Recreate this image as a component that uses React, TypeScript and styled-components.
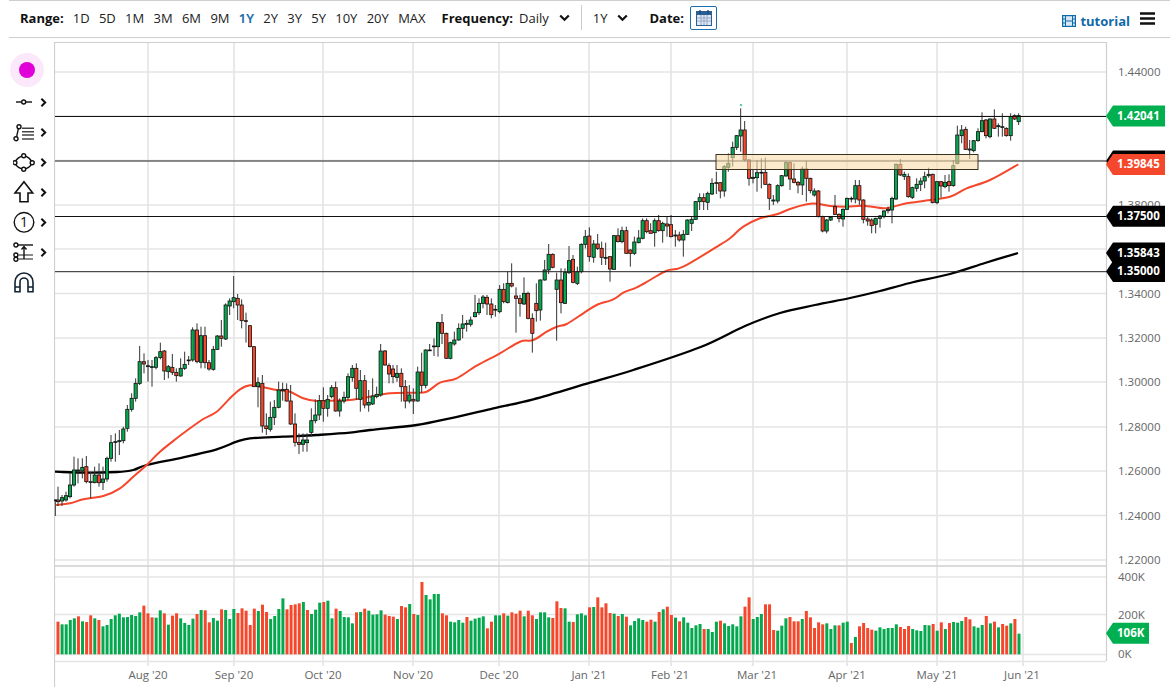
import React from 'react';
import styled, { createGlobalStyle } from 'styled-components';

const GREEN = '#04a84e';
const RED = '#f4472b';
const GRID = '#e4e4e4';
const AXIS = '#cfcfcf';

const GlobalStyle = createGlobalStyle`
  html, body {
    margin: 0;
    padding: 0;
    background: #fff;
    font-family: 'Open Sans', 'Noto Sans', sans-serif;
  }
`;

const Page = styled.div`
  width: 1170px;
  height: 694px;
  overflow: hidden;
  position: relative;
`;

const Toolbar = styled.div`
  display: flex;
  align-items: center;
  height: 38px;
  margin-left: 9px;
  padding: 0 15px 3px 11px;
  box-sizing: border-box;
  border-top: 1px solid ${AXIS};
  border-bottom: 1px solid ${AXIS};
  font-size: 13px;
  color: #222;
`;

const Label = styled.span<{ $ml?: number }>`
  font-weight: 700;
  color: #111;
  margin-left: ${(p) => p.$ml || 0}px;
`;

const RangeList = styled.div`
  display: flex;
  gap: 9.3px;
  margin-left: 9px;
`;

const RangeItem = styled.span<{ $active?: boolean }>`
  color: ${(p) => (p.$active ? '#1c6aa8' : '#222')};
  font-weight: ${(p) => (p.$active ? 600 : 400)};
  -webkit-text-stroke: ${(p) => (p.$active ? '0.2px #1c6aa8' : '0')};
`;

const Select = styled.span<{ $ml: number }>`
  display: flex;
  align-items: center;
  gap: 10px;
  margin-left: ${(p) => p.$ml}px;
`;

const Separator = styled.div`
  width: 1px;
  height: 25px;
  margin-left: 11px;
  background: #ccc;
`;

const DateButton = styled.button`
  display: flex;
  align-items: center;
  justify-content: center;
  width: 27px;
  height: 24px;
  margin-left: 6px;
  padding: 0;
  background: #fff;
  border: 1px solid #1a6fb0;
  border-radius: 2px;
`;

const Tutorial = styled.a`
  display: flex;
  align-items: center;
  gap: 4px;
  margin-left: auto;
  margin-top: 7px;
  font-size: 13px;
  font-weight: 700;
  color: #0f6aa8;
`;

const Burger = styled.svg`
  margin-left: 10px;
  margin-top: 1px;
`;

const Body = styled.div`
  display: flex;
  margin-top: 4px;
`;

const Sidebar = styled.div`
  width: 54px;
  flex: none;
  padding-top: 11px;
  box-sizing: border-box;
`;

const ColorHalo = styled.div`
  display: flex;
  align-items: center;
  justify-content: center;
  width: 34px;
  height: 34px;
  margin-left: 10px;
  border-radius: 50%;
  background: #fbe9fb;
`;

const ColorDot = styled.div`
  width: 16px;
  height: 16px;
  border-radius: 50%;
  background: #e000d8;
`;

const ToolRow = styled.div`
  display: flex;
  align-items: center;
  height: 30px;
  padding-left: 13px;
`;

const ToolIcon = styled.svg`
  width: 22px;
  height: 30px;
  fill: none;
  stroke: #111;
  stroke-width: 1.4;
`;

const ToolChevron = styled.svg`
  margin-left: 5px;
`;

const ChartSvg = styled.svg`
  display: block;
  flex: none;
`;

const Tick = styled.text`
  font-family: 'Open Sans', 'Noto Sans', sans-serif;
  font-size: 11.5px;
  fill: #666;
`;

const TagText = styled.text`
  font-family: 'Open Sans', 'Noto Sans', sans-serif;
  font-size: 11.5px;
  font-weight: 700;
  fill: #fff;
`;

const OneDigit = styled.text`
  font-family: 'Open Sans', 'Noto Sans', sans-serif;
  font-size: 14px;
  fill: #111;
  stroke: none;
`;

// rows: X top bottom high low colour, read off 3x crops, so X/3 + offset is the page pixel
const candleSeg = (ox: number, oy: number, rows: string) =>
  rows
    .trim()
    .split(/\s*,\s*/)
    .map((r) => {
      const [x, top, bot, hi, lo, c] = r.split(' ');
      return {
        x: ox + +x / 3,
        top: oy + +top / 3,
        bot: oy + +bot / 3,
        hi: oy + +hi / 3,
        lo: oy + +lo / 3,
        up: c === 'g',
      };
    });

const candles = [
  ...candleSeg(50, 270, `16 690 692 688 738 g,24 690 695 650 708 r,36 683 693 675 708 g,48 677 690 665 695 g,60 645 680 610 685 g,72 600 645 560 650 g,84 600 603 565 640 g,97 592 603 565 625 g,109 590 635 558 640 r,122 635 637 605 685 r,134 615 638 590 640 g,147 615 638 580 650 r,159 627 637 590 660 g,171 565 627 560 635 g,183 518 565 495 575 g,196 515 517 490 575 g,208 512 515 480 555 g,220 477 512 470 520 g,232 418 475 405 485 g,245 385 418 370 425 g,257 340 385 325 395 g,269 275 340 228 345 g,282 275 282 250 310 r,294 287 290 270 335 g,306 290 292 270 350 g,318 263 292 258 298 g,331 245 263 218 268 g,343 243 303 240 330 r,355 290 305 285 325 g,367 292 307 252 315 r,379 307 317 295 335 r,392 295 318 265 320 g,404 283 295 245 300 g,416 270 272 258 285 g,428 180 270 172 275 g,441 180 275 160 280 r,453 197 277 170 295 g,465 197 278 170 295 r,477 278 297 270 302 r,490 238 298 228 302 g,502 198 238 195 240 g,514 198 205 150 230 r,527 105 207 100 210 g,539 93 108 85 135 g,551 83 95 18 115 g,563 85 105 72 150 r,575 105 152 88 175 r,588 152 154 128 218 r,600 167 230 165 232 r,612 230 350 228 350 r,624 338 350 322 412 g,637 340 468 315 488 r,649 468 476 430 495 r,661 442 478 395 485 g,673 412 442 390 465 g,686 360 412 335 415 g,698 358 362 338 392 g,710 358 393 340 395 r,722 393 462 345 465 r,735 462 517 430 530 r,747 517 523 490 552 r,759 510 523 490 545 g,771 510 518 490 545 g,784 452 487 415 500 g,796 435 452 388 460 g,808 392 435 375 450 g,820 392 415 352 455 r,833 388 415 375 440 g,845 353 380 345 385 g,857 353 423 335 425 r,869 393 423 385 440 g,882 382 393 365 400 g,894 320 382 310 390 g`),
  ...candleSeg(350, 200, `7 505 533 495 545 g,19 505 565 490 600 r,31 542 598 510 635 g,44 542 615 525 625 r,56 607 615 570 635 g,68 588 612 535 615 g,80 583 590 560 595 g,92 453 585 432 590 g,105 453 495 450 497 r,117 497 522 490 550 r,129 507 530 495 550 r,141 520 532 495 545 g,154 520 560 505 605 r,166 560 603 540 625 r,178 585 603 555 610 g,190 598 603 565 642 r,203 516 603 500 605 g,215 516 556 458 578 r,227 450 556 448 565 g,239 450 452 432 452 g,252 438 440 415 468 g,264 368 440 365 470 g,276 368 400 342 432 r,289 400 475 398 477 r,301 428 475 425 478 g,313 420 432 395 437 g,326 385 420 370 422 g,338 372 385 345 415 g,350 370 373 360 395 g,362 360 373 350 380 g,375 338 350 285 352 g,387 310 338 295 345 g,399 291 310 285 325 g,411 292 312 285 345 r,424 312 344 295 355 r,436 328 330 315 350 g,449 268 335 255 340 g,461 268 305 250 310 r,473 250 308 215 310 g,485 250 258 190 262 r,498 288 295 262 398 r,510 296 310 285 350 r,522 280 312 232 315 g,534 280 355 275 358 r,547 355 400 340 458 r,559 310 332 250 365 r,571 240 330 238 362 g,584 210 240 180 242 g,596 163 210 132 222 g,608 163 202 160 205 r,620 240 268 218 422 g,633 240 308 205 340 r,645 218 310 205 312 g,657 182 218 138 222 g,669 178 247 165 250 r,682 215 250 200 255 g,694 133 215 130 220 g,706 110 133 90 145 g,718 108 170 82 185 r,731 132 172 120 188 g,743 132 145 102 150 r,755 145 172 125 195 r,767 172 175 128 195 g,780 170 207 168 245 r,792 107 208 105 210 g,804 107 125 85 127 r,816 92 125 80 130 g,829 92 160 80 162 r,841 150 160 148 200 r,853 126 160 110 165 g,866 114 128 90 130 g,878 62 115 55 118 g,890 62 95 55 100 r,902 92 100 70 100 r,914 62 98 55 140 g,926 62 92 45 95 r,938 70 92 65 128 g,951 72 78 50 110 r,963 74 110 45 112 r,976 105 108 90 140 g,988 105 120 95 125 r,1000 103 120 90 170 g,1012 60 103 58 105 g`),
  ...candleSeg(690, 95, `5 373 385 365 408 g,17 320 373 318 375 g,29 308 320 295 345 g,41 308 320 295 345 r,53 295 322 290 345 g,66 265 297 250 300 g,79 263 265 230 297 g,91 263 288 262 310 r,103 215 288 210 305 g,115 205 217 175 230 g,128 157 188 140 215 g,140 122 157 120 165 g,152 105 123 40 170 g,164 105 195 78 200 r,177 195 250 192 272 r,189 247 250 225 265 g,201 233 248 195 290 g,214 232 234 190 280 g,226 232 268 188 270 r,238 268 310 265 345 r,250 315 318 300 330 g,263 272 318 268 325 g,275 242 272 240 275 g,288 203 243 198 245 g,300 203 252 200 285 r,312 252 262 205 265 r,324 262 270 258 295 r,337 222 270 215 300 g,349 222 250 197 320 r,361 250 287 248 295 r,373 288 300 280 305 g,385 288 365 285 367 r,398 365 408 362 412 r,410 375 408 372 415 g,422 367 375 365 378 g,435 335 358 300 360 r,447 358 370 355 382 r,459 343 372 340 395 g,471 310 343 308 345 g,484 310 312 305 322 g,496 272 312 255 325 g,508 272 315 255 330 r,520 315 373 313 385 r,533 372 378 365 392 r,545 375 392 370 415 r,557 370 388 368 415 g,570 363 370 360 398 g,582 348 365 345 370 g,594 343 347 335 355 g,606 310 345 305 385 g,618 208 312 205 315 g,631 208 240 192 243 r,643 238 244 230 255 g,655 245 305 235 308 r,667 278 307 275 312 g,680 268 280 250 290 g,692 258 268 248 288 g,704 245 258 230 280 g,716 238 242 218 248 g,728 238 323 236 325 r,741 260 323 258 328 g,753 260 273 258 308 r,765 262 275 240 280 g,777 260 272 238 290 r,790 212 272 195 275 g,802 120 205 92 208 g,815 105 122 90 145 g,827 103 163 95 165 r,839 162 165 135 192 g,851 137 167 135 172 g,864 110 137 100 140 g,876 77 110 52 112 g,888 75 122 72 130 r,900 72 125 70 130 g,913 72 100 43 102 r,925 92 95 85 125 g,937 95 97 55 125 g,949 100 122 97 125 r,962 65 122 55 137 g,974 62 72 58 75 r,986 62 80 55 90 g`),
];

const volSeg = (oy: number, s: string) =>
  s.split(' ').map((t) => ({ up: t[0] === 'g', top: oy + +t.slice(1) / 3 }));

const volumes = [
  ...volSeg(560, 'r185 g193 g193 g180 g175 r169 g184 r186 r166 g175 r180 g199 g195 g177 g166 g161 g172 g171 g165 g168 g157 r137 r160 r172 g173 g151 r160 g194 r167 r160 g175 g189 g195 g176 r162 g150 r151 r187 g174 g182 r148 g150 g177 g147 r159 r145 r152 r195 r146 g153 r134 r156 g177 g168 g147 g115 r148 r135 r133 r130 g126 r150 g162 g149 g128 r126 g122 g175 r146 g153 g171 g172 g190 r157 g156 r146 g152 g164 g163 g151 r164 r168 r170 g177 r138 r142 g132 r162 g165 r66 g105 g118 g102 g102'),
  ...volSeg(570, 'r130 r136 g155 g157 g150 g158 r141 g152 g146 g143 g139 r175 r155 g136 g136 r130 g137 r127 r131 r122 g139 r122 r136 g147 g127 g127 g142 r144 r94 r114 g115 g155 r156 g133 g130 g136 r112 g111 r82 r112 r100 r129 g131 r138 g132'),
  ...volSeg(570, 'r140 g166 g153 g145 g150 r155 r149 g155 r126 g118 r110 r135 g143 r154 g142 g158 g174 g166 g162 r177 g177 g186 g155 r152 g160 g168 g163 g169 g139 r110 r82 g147 g141 g132 r103 r103 r180 g182 g167 g145 r141 r154 r154 g147 r123 r142 r174'),
  ...volSeg(560, 'r187 r193 g190 g207 g196 r196 g188 g185 r249 g231 r199 r189 r204 r209 g212 g202 g207 g204 g204 g193 r201 r207 r198 g207 g211 g213 g195 g196 r192 g212 r187 g207 r189 g186 g188 g183 r171 r178 g199 g203 g195 r168 g190 r185 g202 r192 r197 g190 r177 g221'),
];

const VOL_BASE = 654.3;
const VOL_START = 58;
const VOL_STEP = (1019 - 58) / (volumes.length - 1);

const z = (ox: number, oy: number, pts: number[][]) =>
  pts.map(([x, y]) => [ox + x / 3, oy + y / 3]);

const ma50 = [
  ...z(50, 270, [[18, 705], [60, 700], [100, 688], [160, 678], [210, 655], [250, 620], [290, 585], [330, 545], [380, 505], [420, 475], [460, 447], [500, 425], [540, 385], [570, 358], [600, 346], [640, 352], [680, 360], [720, 365], [760, 385], [800, 393], [840, 392], [900, 390]]),
  ...z(350, 200, [[60, 590], [120, 580], [190, 578], [230, 575], [270, 548], [320, 535], [380, 497], [450, 460], [510, 425], [550, 420], [590, 395], [620, 380], [650, 372], [700, 340], [740, 315], [790, 298], [820, 278], [860, 262], [900, 240], [950, 212], [1000, 200]]),
  ...z(690, 95, [[92, 448], [120, 430], [160, 395], [210, 370], [260, 358], [300, 342], [350, 328], [380, 326], [420, 333], [470, 335], [520, 332], [580, 340], [610, 335], [650, 325], [700, 318], [780, 305], [830, 280], [900, 255], [985, 208]]),
];

const ma200 = [
  ...z(50, 270, [[15, 605], [100, 608], [200, 606], [250, 600], [290, 585], [400, 562], [500, 538], [560, 515], [600, 505], [700, 500], [800, 495], [900, 488]]),
  ...z(350, 200, [[60, 690], [200, 675], [300, 655], [430, 625], [550, 598], [720, 548], [850, 510], [1050, 442]]),
  [745, 326], [780, 313], [815, 305], [850, 298], [880, 291], [910, 283], [950, 274], [985, 263], [1018, 253],
];

// catmull-rom through the read points so the averages bend instead of kink
const smoothPath = (pts: number[][]) => {
  let d = `M${pts[0][0].toFixed(1)} ${pts[0][1].toFixed(1)}`;
  for (let i = 0; i < pts.length - 1; i++) {
    const p0 = pts[i - 1] || pts[i];
    const p1 = pts[i];
    const p2 = pts[i + 1];
    const p3 = pts[i + 2] || p2;
    const c1 = [p1[0] + (p2[0] - p0[0]) / 6, p1[1] + (p2[1] - p0[1]) / 6];
    const c2 = [p2[0] - (p3[0] - p1[0]) / 6, p2[1] - (p3[1] - p1[1]) / 6];
    d += `C${c1[0].toFixed(1)} ${c1[1].toFixed(1)} ${c2[0].toFixed(1)} ${c2[1].toFixed(1)} ${p2[0].toFixed(1)} ${p2[1].toFixed(1)}`;
  }
  return d;
};

const gridRows = [72, 116, 160.5, 205, 249, 293.5, 338, 382, 427, 471, 515.5, 560];

// 1.42, 1.40 and 1.36 sit fully behind the price tags, so they are not drawn
const priceTicks = [
  ['1.44000', 72], ['1.38000', 205], ['1.34000', 293.5], ['1.32000', 338], ['1.30000', 382],
  ['1.28000', 427], ['1.26000', 471], ['1.24000', 515.5], ['1.22000', 560],
] as const;

const monthLines = [148, 234, 323, 413, 499, 589, 671, 753, 847, 937, 1023];
const monthLabels = [
  ["Aug '20", 148], ["Sep '20", 234], ["Oct '20", 323], ["Nov '20", 413], ["Dec '20", 499], ["Jan '21", 589],
  ["Feb '21", 670], ["Mar '21", 757], ["Apr '21", 847], ["May '21", 937], ["Jun '21", 1022],
] as const;

const ranges = ['1D', '5D', '1M', '3M', '6M', '9M', '1Y', '2Y', '3Y', '5Y', '10Y', '20Y', 'MAX'];

const Chevron: React.FC = () => (
  <svg width="11" height="8" viewBox="0 0 11 8">
    <path d="M1.2 1.5 L5.5 5.8 L9.8 1.5" fill="none" stroke="#111" strokeWidth="2.2" />
  </svg>
);

const SideChevron: React.FC = () => (
  <ToolChevron width="7" height="9" viewBox="0 0 7 9">
    <path d="M1.4 0.8 L5.2 4.5 L1.4 8.2" fill="none" stroke="#111" strokeWidth="2" />
  </ToolChevron>
);

const PriceTag: React.FC<{ y: number; color: string; text?: string; right?: number; h?: number }> = ({
  y,
  color,
  text,
  right = 1165,
  h = 10.5,
}) => (
  <g>
    <polygon
      points={`1106,${y} 1113,${y - h} ${right},${y - h} ${right},${y + h} 1113,${y + h}`}
      fill={color}
    />
    {text && (
      <TagText x="1117" y={y + 3.6}>
        {text}
      </TagText>
    )}
  </g>
);

const tools: React.ReactNode[] = [
  <>
    <line x1="3" y1="15" x2="19" y2="15" />
    <circle cx="10.7" cy="15" r="2" fill="#fff" />
  </>,
  <>
    <circle cx="6" cy="9.7" r="2" />
    <circle cx="3" cy="21.7" r="2" />
    <line x1="5.4" y1="11.6" x2="3.6" y2="19.8" />
    <path d="M9 11.3H21M9 14.7H21M9 18H21M9 22H21" stroke="#444" />
  </>,
  <>
    <path d="M10.7 8.7Q4 10 1.8 15.7Q4 21 10.7 22.3Q17 21 19.2 15.7Q17 10 10.7 8.7Z" />
    <circle cx="10.7" cy="8.7" r="2" fill="#fff" />
    <circle cx="1.9" cy="15.7" r="2" fill="#fff" />
    <circle cx="19.2" cy="15.7" r="2" fill="#fff" />
    <circle cx="10.7" cy="22.3" r="2" fill="#fff" />
  </>,
  <polygon points="11,4.7 2,16 7,16 7,24.7 15,24.7 15,16 19.7,16" strokeWidth="1.6" />,
  <>
    <circle cx="11" cy="15.3" r="9.8" />
    <OneDigit x="11" y="20.3" textAnchor="middle">
      1
    </OneDigit>
  </>,
  <>
    <line x1="5" y1="8" x2="20" y2="8" />
    <circle cx="2.9" cy="8" r="2" />
    <circle cx="2.9" cy="18" r="2" />
    <circle cx="2.9" cy="22.3" r="2" />
    <path d="M5 18H20M5 22H20" stroke="#666" />
    <path d="M11 9V22M8.5 12.5L11 9.5L13.5 12.5" />
  </>,
  <>
    <path d="M2 24.7V15a9 9 0 0 1 18 0V24.7H15V15a4 4 0 0 0-8 0V24.7Z" strokeWidth="1.6" stroke="#123" />
    <path d="M2 20H7M15 20H20" stroke="#123" />
  </>,
];

const Candles: React.FC = () => (
  <g>
    {candles.map((c, i) => (
      <g key={i}>
        <line x1={c.x} x2={c.x} y1={c.hi} y2={c.lo} stroke="#333" strokeWidth="1" />
        <rect
          x={c.x - 1.6}
          y={c.top}
          width={3.2}
          height={Math.max(c.bot - c.top, 0.8)}
          fill={c.up ? GREEN : RED}
          stroke="#111"
          strokeWidth="0.8"
        />
      </g>
    ))}
  </g>
);

const VolumeBars: React.FC = () => (
  <g>
    {volumes.map((v, i) => (
      <rect
        key={i}
        x={VOL_START + i * VOL_STEP - 1.5}
        y={v.top}
        width={3}
        height={VOL_BASE - v.top}
        fill={v.up ? GREEN : RED}
      />
    ))}
  </g>
);

const Chart: React.FC = () => (
  <ChartSvg width="1116" height="652" viewBox="54 42 1116 652">
    {gridRows.map((y) => (
      <line key={y} x1="55" x2="1106" y1={y} y2={y} stroke={GRID} strokeWidth="1.6" />
    ))}
    {[577, 614.5, 654.5, 661.5].map((y) => (
      <line key={y} x1="55" x2="1106" y1={y} y2={y} stroke={GRID} strokeWidth="1.6" />
    ))}
    {monthLines.map((x) => (
      <line key={x} x1={x} x2={x} y1="42" y2="666" stroke={GRID} strokeWidth="1.6" />
    ))}
    <line x1="54" x2="1106" y1="42.5" y2="42.5" stroke={AXIS} />
    <line x1="54" x2="1106" y1="566" y2="566" stroke={AXIS} strokeWidth="1.6" />
    <line x1="54.5" x2="54.5" y1="42" y2="687" stroke={AXIS} strokeWidth="1.2" />
    <line x1="1106.5" x2="1106.5" y1="42" y2="661" stroke={AXIS} strokeWidth="1.2" />

    <VolumeBars />
    <path d={smoothPath(ma200)} fill="none" stroke="#000" strokeWidth="2.3" />
    <path d={smoothPath(ma50)} fill="none" stroke={RED} strokeWidth="2" />
    <Candles />
    <line x1="740" x2="742" y1="104.5" y2="105.5" stroke="#3fc483" strokeWidth="1.4" />

    <line x1="55" x2="1106" y1="116.5" y2="116.5" stroke="#111" />
    <line x1="55" x2="1106" y1="161" y2="161" stroke="#222" />
    <line x1="55" x2="1106" y1="216.5" y2="216.5" stroke="#111" />
    <line x1="55" x2="1106" y1="271.7" y2="271.7" stroke="#222" />
    <rect x="716" y="154.5" width="262" height="15" fill="#f8dca8" fillOpacity="0.6" stroke="#3a3020" />

    {priceTicks.map(([t, y]) => (
      <Tick key={t} x="1118" y={y + 4}>
        {t}
      </Tick>
    ))}
    {[['400K', 581], ['200K', 619], ['0K', 658]].map(([t, y]) => (
      <Tick key={t} x="1118" y={y}>
        {t}
      </Tick>
    ))}
    {monthLabels.map(([t, x]) => (
      <Tick key={t} x={x} y="679" textAnchor="middle">
        {t}
      </Tick>
    ))}

    <PriceTag y={116} color="#00b050" text="1.42041" />
    <PriceTag y={161} color="#000" />
    <PriceTag y={164.5} color="#f4472b" text="1.39845" />
    <PriceTag y={216.3} color="#000" text="1.37500" />
    <PriceTag y={253} color="#000" text="1.35843" />
    <PriceTag y={271.6} color="#000" text="1.35000" />
    <PriceTag y={633.3} color="#00b050" text="106K" right={1149} />
  </ChartSvg>
);

const App: React.FC = () => (
  <Page>
    <GlobalStyle />
    <Toolbar>
      <Label>Range:</Label>
      <RangeList>
        {ranges.map((r) => (
          <RangeItem key={r} $active={r === '1Y'}>
            {r}
          </RangeItem>
        ))}
      </RangeList>
      <Label $ml={16}>Frequency:</Label>
      <Select $ml={6}>
        Daily <Chevron />
      </Select>
      <Separator />
      <Select $ml={11}>
        1Y <Chevron />
      </Select>
      <Label $ml={21}>Date:</Label>
      <DateButton aria-label="Date">
        <svg width="16" height="17" viewBox="0 0 16 17">
          <rect x="0.5" y="2.5" width="15" height="14" fill="#dbe6f2" stroke="#2d5f92" />
          <rect x="1" y="3" width="14" height="3" fill="#2d5f92" />
          <path d="M4 1V5M12 1V5" stroke="#174a7e" strokeWidth="1.4" />
          <path d="M5 6V16M8 6V16M11 6V16M1 9H15M1 12H15" stroke="#8c9fc4" strokeWidth="0.8" />
        </svg>
      </DateButton>
      <Tutorial>
        <svg width="14" height="12" viewBox="0 0 14 12">
          <rect x="0.6" y="0.6" width="12.8" height="10.8" fill="#d8e8f4" stroke="#0f6aa8" strokeWidth="1.2" />
          <path d="M3.5 1V11M10.5 1V11M1 4H3.5M1 8H3.5M10.5 4H13M10.5 8H13M3.5 6H10.5" stroke="#0f6aa8" />
        </svg>
        tutorial
      </Tutorial>
      <Burger width="15" height="13" viewBox="0 0 15 13">
        <path d="M0 1.5H15M0 6.5H15M0 11.5H15" stroke="#111" strokeWidth="2.4" />
      </Burger>
    </Toolbar>
    <Body>
      <Sidebar>
        <ColorHalo>
          <ColorDot />
        </ColorHalo>
        {tools.map((icon, i) => (
          <ToolRow key={i}>
            <ToolIcon viewBox="0 0 22 30">{icon}</ToolIcon>
            {i < tools.length - 1 && <SideChevron />}
          </ToolRow>
        ))}
      </Sidebar>
      <Chart />
    </Body>
  </Page>
);

export default App;
